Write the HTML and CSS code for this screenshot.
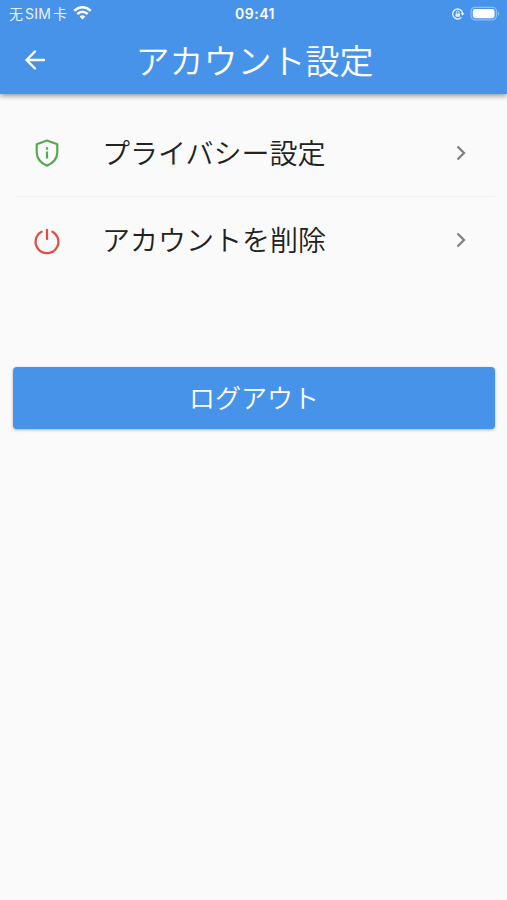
FILE: index.html
```html
<!DOCTYPE html>
<html lang="ja">
<head>
<meta charset="utf-8">
<title>アカウント設定</title>
<link rel="stylesheet" href="styles.css">
</head>
<body>
<header class="header">
  <div class="status">
    <div class="carrier"><span lang="zh-CN" class="sim"><span class="han">无</span><span class="latin">SIM</span><span class="han">卡</span></span>
      <svg class="wifi" width="19" height="14" viewBox="0 0 19 14" fill="none" stroke="#fff" stroke-width="2.5"><path d="M1.2 4.700Q9.500-2.200 17.800 4.700M4.300 8Q9.500 3.500 14.700 8"/><path d="M6.600 10.500Q9.500 8.200 12.400 10.500L9.500 13.400Z" fill="#fff" stroke="none"/></svg>
    </div>
    <div class="clock">09:41</div>
    <div class="indicators">
      <svg width="14" height="14" viewBox="0 0 14 14" fill="none" stroke="#e7f2ff"><path d="M10.4 10.4A5 5 0 1 1 11.6 6" stroke-width="1.3"/><path d="M9.5 6h4l-2 2.8z" fill="#e7f2ff" stroke="none"/><rect x="4.5" y="6.4" width="4.4" height="3.4" rx=".6" fill="#e7f2ff" stroke="none"/><path d="M5.4 6.5V5.3a1.3 1.3 0 0 1 2.6 0v1.2" stroke-width="1"/></svg>
      <svg width="31" height="16" viewBox="0 0 31 16"><rect x="1" y="1.300" width="25.500" height="12.500" rx="4" fill="none" stroke="#8dbef5" stroke-width="1.2"/><rect x="2.800" y="3" width="21.800" height="9.200" rx="2.4" fill="#fff"/><path d="M28 5.400q2.500 2.200 0 4.400z" fill="#8dbef5"/></svg>
    </div>
  </div>
  <div class="toolbar">
    <svg class="back" width="24" height="24" viewBox="0 0 24 24" fill="none" stroke="#fff" stroke-width="2.400" stroke-linecap="round" stroke-linejoin="round"><path d="M21 12H3.500M12 3.500L3.500 12l8.500 8.500"/></svg>
    <h1>アカウント設定</h1>
  </div>
</header>
<main>
  <ul class="list">
    <li class="row">
      <svg class="icon" width="28" height="30" viewBox="0 0 28 30" fill="none" stroke="#55aa50" stroke-width="2.2"><path d="M14 2.500L24.300 6.300V14.500C24.300 20.500 20 25.600 14 27.600C8 25.600 3.700 20.500 3.700 14.500V6.300Z" stroke-linejoin="round"/><path d="M14 13.400V20.600M14 9.200v2.500"/></svg>
      <span class="label">プライバシー設定</span>
      <svg class="chevron" width="12" height="18" viewBox="0 0 12 18" fill="none" stroke="#808080" stroke-width="2.300"><path d="M1.500 2.500L8 9l-6.500 6.500"/></svg>
    </li>
    <li class="row">
      <svg class="icon" width="28" height="30" viewBox="0 0 28 30" fill="none" stroke="#de5146" stroke-width="2.300" stroke-linecap="round"><path d="M8.600 6.700A11.400 11.400 0 1 0 19.400 6.700M14 5V14"/></svg>
      <span class="label">アカウントを削除</span>
      <svg class="chevron" width="12" height="18" viewBox="0 0 12 18" fill="none" stroke="#808080" stroke-width="2.300"><path d="M1.500 2.500L8 9l-6.500 6.500"/></svg>
    </li>
  </ul>
  <button class="logout" type="button">ログアウト</button>
</main>
</body>
</html>
```

FILE: styles.css
```css
* { box-sizing: border-box; }
body {
  margin: 0;
  min-height: 900px;
  background: #fafafa;
  color: #222;
  font-family: "Noto Sans CJK JP", sans-serif;
  font-weight: 350;
}
.header {
  height: 94px;
  background: #4893ea;
  color: #fff;
  box-shadow: 0 2px 5px rgba(0, 0, 0, .4);
}
.status {
  display: grid;
  grid-template-columns: 1fr auto 1fr;
  align-items: center;
  height: 28px;
  padding: 0 6px 0 9px;
}
.carrier { display: flex; align-items: center; gap: 6px; }
.sim {
  display: flex;
  gap: 2px;
  align-items: center;
  font: 14px/20px "Noto Sans CJK SC", sans-serif;
  color: #e7f2ff;
}
.han { padding-bottom: 2px; }
.wifi { margin-bottom: 2px; }
.latin { font-family: Inter, sans-serif; letter-spacing: .2px; }
.clock { font: 600 14px/20px Inter, sans-serif; letter-spacing: .5px; }
.indicators { display: flex; justify-content: flex-end; align-items: center; gap: 5px; }
.toolbar {
  display: grid;
  grid-template-columns: 135px 1fr 133px;
  align-items: center;
  height: 64px;
}
.back { margin-left: 23px; }
h1 {
  margin: 0;
  font-size: 34px;
  line-height: 50px;
  font-weight: 350;
  white-space: nowrap;
  text-align: center;
}
.list { list-style: none; margin: 16px 12px 0 15px; padding: 0; }
.row {
  display: flex;
  align-items: center;
  height: 88px;
  padding: 0 27px 0 18px;
  border-bottom: 1px solid #eee;
}
.row:last-child { border-bottom-color: #f8f8f8; }
.icon { margin-bottom: 1px; }
.chevron { margin-bottom: 1px; }
.label {
  flex: 1;
  margin-left: 41px;
  padding-bottom: 3px;
  font-size: 28px;
  line-height: 42px;
}
.row:first-child { height: 87px; }
.logout {
  display: block;
  width: 482px;
  height: 62px;
  margin: 82px 0 0 13px;
  padding: 0 0 2px;
  border: 0;
  border-radius: 4px;
  background: #4893ea;
  color: #fff;
  font: 350 26px/60px "Noto Sans CJK JP", sans-serif;
  box-shadow: 0 1px 3px rgba(0, 0, 0, .3);
}
```
